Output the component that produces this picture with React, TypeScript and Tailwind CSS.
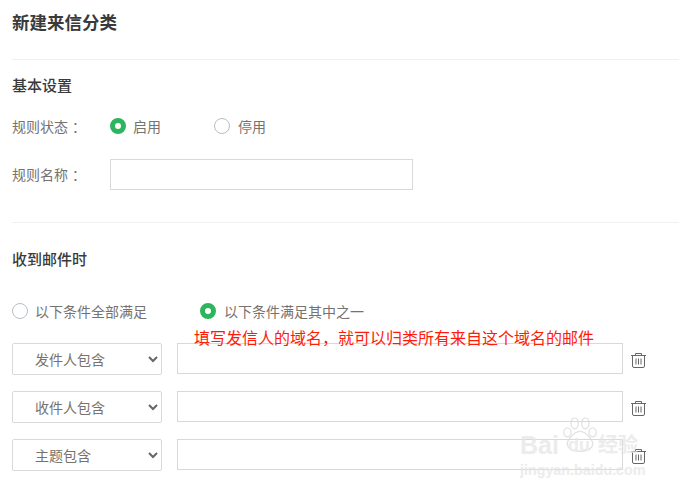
import React from "react";

const font = { fontFamily: '"Noto Sans CJK SC", sans-serif' };

function Radio({ on }: { on?: boolean }) {
  return on ? (
    <span className="box-border block w-4 h-4 rounded-full border-[5px] border-[#2db55d] bg-white shrink-0" />
  ) : (
    <span className="box-border block w-4 h-4 rounded-full border border-[#b8bec6] bg-white shrink-0" />
  );
}

function Trash() {
  return (
    <svg width="15" height="15" viewBox="0 0 15 15" fill="none" stroke="#666" strokeWidth="1" className="shrink-0 block">
      <path d="M0 2.5H15M4.5 2.5V0.5H10.5V2.5M1.5 2.5V13a1.5 1.5 0 0 0 1.5 1.5h9a1.5 1.5 0 0 0 1.5-1.5V2.5M5 5.5V11.5M7.5 5.5V11.5M10 5.5V11.5" />
    </svg>
  );
}

function Label({ text }: { text: string }) {
  return (
    <span className="w-[98px]">
      {text}
      <span className="ml-[4px]">：</span>
    </span>
  );
}

function Row({ label }: { label: string }) {
  return (
    <div className="flex items-start h-[32px] mb-4">
      <div className="box-border w-[150px] h-[32px] border border-[#d9d9d9] rounded-[2px] bg-white flex items-center justify-between pl-[22px] pr-[2px] text-[14px] text-[#77726d]">
        <span>{label}</span>
        <svg width="12" height="12" viewBox="0 0 12 12" fill="none" stroke="#6b6560" strokeWidth="2">
          <path d="M2 4L6 8L10 4" />
        </svg>
      </div>
      <div className="box-border ml-[15px] w-[446px] h-[31px] border border-[#d9d9d9] bg-white" />
      <div className="ml-[8px] mt-[10px]">
        <Trash />
      </div>
    </div>
  );
}

export default function App() {
  return (
    <div className="relative w-[679px] h-[490px] overflow-hidden bg-white pl-3" style={font}>
      <h1 className="h-[59px] pt-[9px] text-[17.5px] leading-[26px] font-bold text-[#3a3a3a]">新建来信分类</h1>
      <div className="h-px bg-[#f0f0f0]" />
      <h2 className="mt-[15px] text-[15px] leading-[20px] font-medium text-[#3a3a3a]">基本设置</h2>
      <div className="mt-[21px] h-[20px] flex items-center text-[14px] text-[#77726d]">
        <Label text="规则状态" />
        <Radio on />
        <span className="ml-[7px] w-[81px]">启用</span>
        <Radio />
        <span className="ml-[8px]">停用</span>
      </div>
      <div className="mt-[23px] flex items-center text-[14px] text-[#77726d]">
        <Label text="规则名称" />
        <div className="box-border w-[303px] h-[31px] border border-[#d9d9d9] bg-white" />
      </div>
      <div className="mt-[32px] h-px bg-[#f0f0f0]" />
      <h2 className="mt-[26px] text-[15px] leading-[20px] font-medium text-[#3a3a3a]">收到邮件时</h2>
      <div className="mt-[32px] h-[20px] flex items-center text-[14px] text-[#77726d]">
        <Radio />
        <span className="ml-[7px] w-[165px]">以下条件全部满足</span>
        <Radio on />
        <span className="ml-[8px]">以下条件满足其中之一</span>
      </div>
      <div className="mt-[22px]">
        <Row label="发件人包含" />
        <Row label="收件人包含" />
        <Row label="主题包含" />
      </div>
      <div className="absolute left-[194px] top-[326px] text-[16px] leading-[22px] text-[#ff1a0a] whitespace-nowrap">
        填写发信人的域名，就可以归类所有来自这个域名的邮件
      </div>
      <div className="absolute left-[519px] top-[417px] w-[125px] h-[64px] text-[#e4e4e4] opacity-70 pointer-events-none">
        <svg width="36" height="36" viewBox="0 0 40 40" className="absolute left-[43px] top-0" fill="none" stroke="#d8d8d8" strokeWidth="1.5">
          <ellipse cx="6" cy="17" rx="4" ry="5" />
          <ellipse cx="14" cy="7" rx="4" ry="6" />
          <ellipse cx="26" cy="7" rx="4" ry="6" />
          <ellipse cx="34" cy="17" rx="4" ry="5" />
          <path d="M20 16c-7 0-10 6-13 10-3 5 0 12 13 12s16-7 13-12c-3-4-6-10-13-10z" />
        </svg>
        <div className="absolute left-[1px] top-[14px] text-[25px] leading-[28px] font-bold whitespace-nowrap" style={{ fontFamily: '"Liberation Sans", sans-serif' }}>Bai</div>
        <div className="absolute left-[49px] top-[17px] text-[18px] leading-[22px] font-bold whitespace-nowrap" style={{ fontFamily: '"Liberation Sans", sans-serif' }}>du</div>
        <div className="absolute left-[79px] top-[13px] text-[20px] leading-[28px] font-bold whitespace-nowrap">经验</div>
        <div className="absolute left-[1px] top-[44px] text-[14.3px] leading-[18px] font-bold whitespace-nowrap" style={{ fontFamily: '"Liberation Sans", sans-serif' }}>jingyan.baidu.com</div>
      </div>
    </div>
  );
}
